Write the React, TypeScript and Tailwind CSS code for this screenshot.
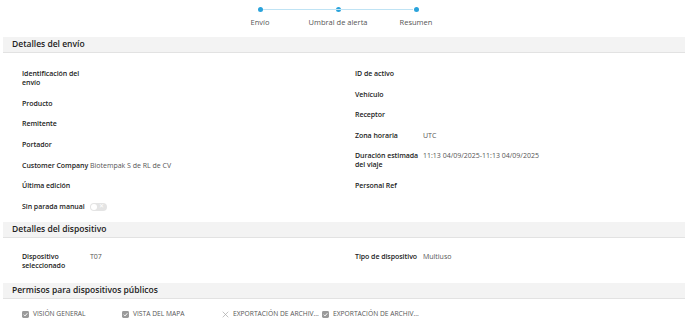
import React from "react";

const font = { fontFamily: '"Open Sans", "Noto Sans", sans-serif' };

const Step = ({ label }: { label: string }) => (
  <div className="flex w-[78px] flex-col items-center">
    <div className="h-[5px] w-[5px] rounded-full bg-[#2aa3db]" />
    <div className="mt-[6px] text-[7.5px] leading-[9px] text-[#555]">{label}</div>
  </div>
);

const SectionHeader = ({ title }: { title: string }) => (
  <div className="mx-[3px] flex h-[16px] items-center border-b border-[#e2e2e2] bg-[#f3f3f3] pl-[9px] text-[8.5px] font-semibold text-[#222]">
    {title}
  </div>
);

const Field = ({
  label,
  value,
  children,
}: {
  label: string;
  value?: string;
  children?: React.ReactNode;
}) => (
  <div className="flex items-start text-[7px] leading-[9px]">
    <div className="w-[68px] shrink-0 font-semibold tracking-[-0.05px] text-[#222]">{label}</div>
    {value && <div className="text-[#555]">{value}</div>}
    {children}
  </div>
);

const Toggle = () => (
  <div className="relative mt-[0.5px] flex h-[8px] w-[17px] items-center rounded-full bg-[#e4e4e4]">
    <div className="ml-[1px] h-[6px] w-[6px] rounded-full bg-white" />
    <span className="absolute right-[3px] top-[-0.5px] text-[6px] leading-[8px] text-white">✕</span>
  </div>
);

const CheckIcon = () => (
  <svg width="7" height="7" viewBox="0 0 10 10">
    <rect x="0" y="0" width="10" height="10" rx="2" fill="#9a9a9a" />
    <path d="M2.5 5.2 L4.3 7 L7.6 3.2" stroke="#fff" strokeWidth="1.4" fill="none" />
  </svg>
);

const CrossIcon = () => (
  <svg width="7" height="7" viewBox="0 0 10 10">
    <path d="M1 1 L9 9 M9 1 L1 9" stroke="#a8a8a8" strokeWidth="1" fill="none" />
  </svg>
);

const Perm = ({ label, on }: { label: string; on: boolean }) => (
  <div className="flex w-[100px] items-center gap-[4px]">
    {on ? <CheckIcon /> : <CrossIcon />}
    <span className="whitespace-nowrap text-[6.7px] text-[#555]">{label}</span>
  </div>
);

export default function App() {
  return (
    <div className="h-[330px] w-[688px] overflow-hidden bg-white" style={font}>
      <div className="flex h-[37px] justify-center pr-[12px] pt-[7px]">
        <div className="relative flex">
          <div className="absolute left-[42px] right-[42px] top-[2px] h-[1px] bg-[#bfe3f4]" />
          <Step label="Envío" />
          <Step label="Umbral de alerta" />
          <Step label="Resumen" />
        </div>
      </div>

      <SectionHeader title="Detalles del envío" />
      <div className="grid grid-cols-2 pb-[11px] pl-[22px] pt-[16px]">
        <div className="flex flex-col gap-[11.7px]">
          <Field label="Identificación del envío" />
          <Field label="Producto" />
          <Field label="Remitente" />
          <Field label="Portador" />
          <Field label="Customer Company" value="Biotempak S de RL de CV" />
          <Field label="Última edición" />
          <Field label="Sin parada manual">
            <Toggle />
          </Field>
        </div>
        <div className="flex flex-col gap-[11.5px]">
          <Field label="ID de activo" />
          <Field label="Vehículo" />
          <Field label="Receptor" />
          <Field label="Zona horaria" value="UTC" />
          <Field label="Duración estimada del viaje" value="11:13 04/09/2025-11:13 04/09/2025" />
          <Field label="Personal Ref" />
        </div>
      </div>

      <SectionHeader title="Detalles del dispositivo" />
      <div className="grid grid-cols-2 pb-[13px] pl-[22px] pt-[14px]">
        <Field label="Dispositivo seleccionado" value="T07" />
        <Field label="Tipo de dispositivo" value="Multiuso" />
      </div>

      <SectionHeader title="Permisos para dispositivos públicos" />
      <div className="flex pl-[22px] pt-[10px]">
        <Perm label="VISIÓN GENERAL" on />
        <Perm label="VISTA DEL MAPA" on />
        <Perm label="EXPORTACIÓN DE ARCHIV..." on={false} />
        <Perm label="EXPORTACIÓN DE ARCHIV..." on />
      </div>
    </div>
  );
}
